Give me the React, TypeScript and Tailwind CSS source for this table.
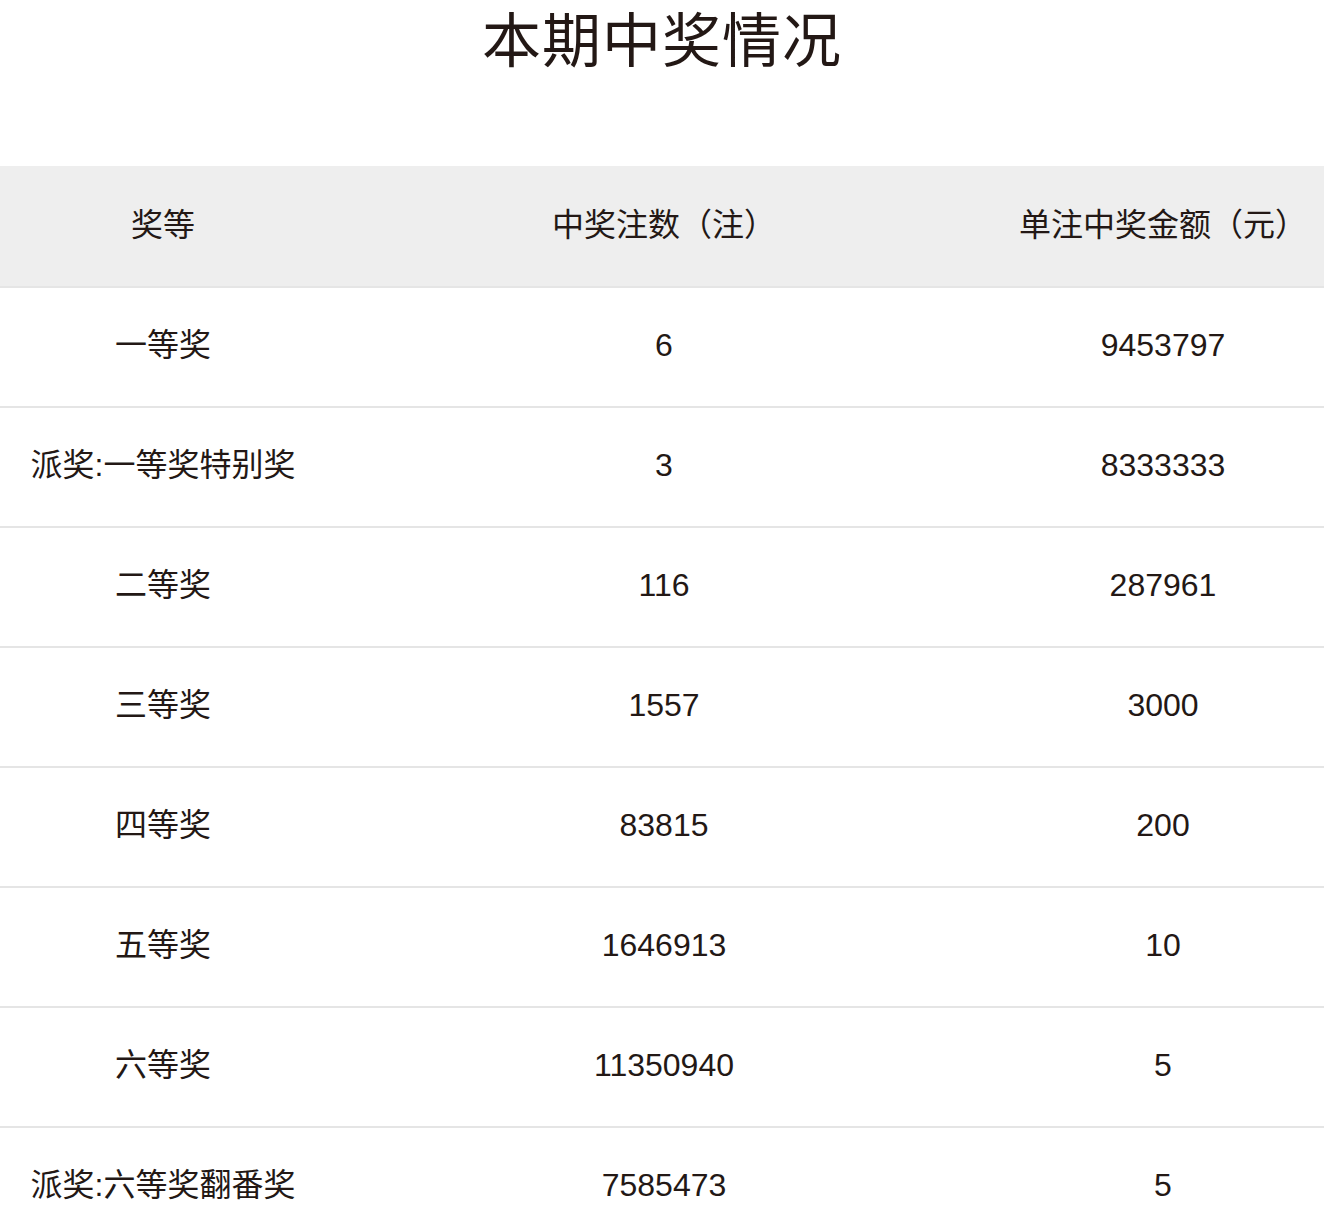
import React from "react";

const rows: [string, string, string][] = [
  ["一等奖", "6", "9453797"],
  ["派奖:一等奖特别奖", "3", "8333333"],
  ["二等奖", "116", "287961"],
  ["三等奖", "1557", "3000"],
  ["四等奖", "83815", "200"],
  ["五等奖", "1646913", "10"],
  ["六等奖", "11350940", "5"],
  ["派奖:六等奖翻番奖", "7585473", "5"],
];

export default function App() {
  return (
    <div
      className="w-[1324px] bg-white text-[#231815]"
      style={{ fontFamily: '"Liberation Sans", "Noto Sans CJK SC", sans-serif' }}
    >
      <div className="h-[166px] flex justify-center">
        <h1 className="text-[59px] leading-[84px] font-normal tracking-[1px]">本期中奖情况</h1>
      </div>
      <div className="grid grid-cols-[326px_676px_322px] h-[122px] bg-[#eeeeee] border-b-2 border-[#e5e5e5] text-[32px] pb-[2px]">
        <div className="flex items-center justify-center">奖等</div>
        <div className="flex items-center justify-center">中奖注数（注）</div>
        <div className="flex items-center justify-center whitespace-nowrap">单注中奖金额（元）</div>
      </div>
      {rows.map((r, i) => (
        <div
          key={i}
          className="grid grid-cols-[326px_676px_322px] h-[120px] border-b-2 border-[#e5e5e5] text-[32px] pb-[4px]"
        >
          <div className="flex items-center justify-center whitespace-nowrap">{r[0]}</div>
          <div className="flex items-center justify-center">{r[1]}</div>
          <div className="flex items-center justify-center">{r[2]}</div>
        </div>
      ))}
    </div>
  );
}
